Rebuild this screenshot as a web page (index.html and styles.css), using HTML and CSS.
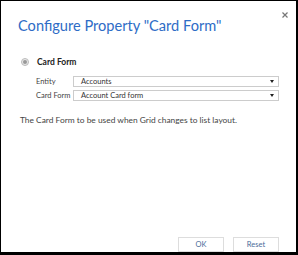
FILE: index.html
```html
<!DOCTYPE html>
<html>
<head>
<meta charset="utf-8">
<link rel="stylesheet" href="styles.css">
</head>
<body>
<div class="dialog">
  <button class="close" aria-label="Close">
    <svg width="6" height="6" viewBox="0 0 6 6"><path d="M0.5 0.5L5.5 5.5M5.5 0.5L0.5 5.5" stroke="#777" stroke-width="1.2"/></svg>
  </button>
  <h1 class="title">Configure Property "Card Form"</h1>
  <div class="option">
    <span class="radio"><span class="dot"></span></span>
    <span class="option-label">Card Form</span>
  </div>
  <div class="fields">
    <label class="field">
      <span class="field-label">Entity</span>
      <span class="select"><span class="value">Accounts</span><span class="arrow"></span></span>
    </label>
    <label class="field">
      <span class="field-label">Card Form</span>
      <span class="select"><span class="value">Account Card form</span><span class="arrow"></span></span>
    </label>
  </div>
  <p class="desc">The Card Form to be used when Grid changes to list layout.</p>
  <div class="spacer"></div>
  <div class="buttons">
    <button class="btn">OK</button>
    <button class="btn">Reset</button>
  </div>
</div>
</body>
</html>
```
FILE: styles.css
```css
html, body {
  margin: 0;
  padding: 0;
  background: #000;
}
body {
  width: 298px;
  height: 255px;
  overflow: hidden;
  font-family: "Lato", "Open Sans", sans-serif;
}
.dialog {
  position: relative;
  box-sizing: border-box;
  margin: 1px 2px 0 1px;
  width: 295px;
  height: 251px;
  background: #fff;
  display: flex;
  flex-direction: column;
  padding: 0 0 0 17px;
}
.close {
  position: absolute;
  top: 10px;
  right: 7px;
  width: 8px;
  height: 8px;
  padding: 0;
  border: 0;
  background: none;
  display: flex;
  align-items: center;
  justify-content: center;
}
.title {
  margin: 16px 0 0 0;
  font-weight: 400;
  font-size: 14.6px;
  line-height: 18px;
  color: #2e6cc6;
}
.option {
  display: flex;
  align-items: center;
  margin: 21px 0 0 3px;
  height: 12px;
}
.radio {
  width: 6px;
  height: 6px;
  border-radius: 50%;
  border: 1px solid #bbb;
  background: #e8e8e8;
  display: flex;
  align-items: center;
  justify-content: center;
}
.dot {
  width: 4px;
  height: 4px;
  border-radius: 50%;
  background: #999;
}
.option-label {
  margin-left: 8px;
  font-size: 8.5px;
  font-weight: 700;
  color: #222;
}
.fields {
  display: flex;
  flex-direction: column;
  gap: 3px;
  margin: 8px 0 0 18px;
}
.field {
  display: flex;
  align-items: center;
  height: 11px;
}
.field-label {
  width: 37px;
  font-size: 7.5px;
  color: #444;
}
.select {
  box-sizing: border-box;
  width: 206px;
  height: 11px;
  border: 1px solid #ccc;
  display: flex;
  align-items: center;
  justify-content: space-between;
  padding: 0 4px 0 7px;
}
.value {
  font-size: 7.5px;
  color: #333;
}
.arrow {
  width: 0;
  height: 0;
  border-left: 2px solid transparent;
  border-right: 2px solid transparent;
  border-top: 3px solid #222;
}
.desc {
  margin: 14px 0 0 2px;
  font-size: 8.4px;
  color: #444;
}
.spacer {
  flex: 1;
}
.buttons {
  display: flex;
  justify-content: flex-end;
  gap: 9px;
  padding: 0 17px 0 0;
}
.btn {
  box-sizing: border-box;
  width: 46px;
  height: 15px;
  border: 1px solid #ddd;
  background: #fff;
  font-family: "Lato", sans-serif;
  font-size: 7.5px;
  color: #4a6c9a;
  padding: 0;
}
```
